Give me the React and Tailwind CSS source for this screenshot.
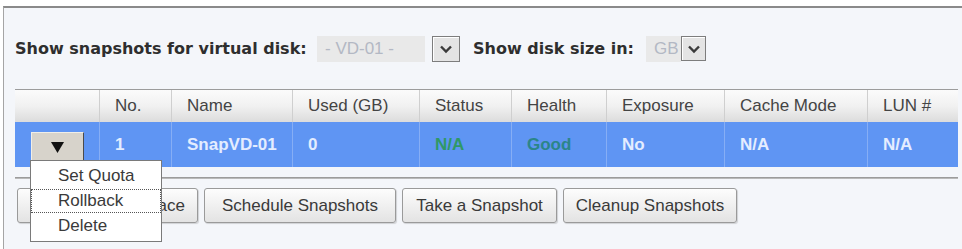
import React from 'react';

const cols = [
  { key: 'act', label: '', w: 'w-[85px]' },
  { key: 'no', label: 'No.', w: 'w-[72px]' },
  { key: 'name', label: 'Name', w: 'w-[121px]' },
  { key: 'used', label: 'Used (GB)', w: 'w-[127px]' },
  { key: 'status', label: 'Status', w: 'w-[92px]' },
  { key: 'health', label: 'Health', w: 'w-[95px]' },
  { key: 'exp', label: 'Exposure', w: 'w-[118px]' },
  { key: 'cache', label: 'Cache Mode', w: 'w-[143px]' },
  { key: 'lun', label: 'LUN #', w: 'flex-1' },
];

const row = {
  no: '1',
  name: 'SnapVD-01',
  used: '0',
  status: 'N/A',
  health: 'Good',
  exp: 'No',
  cache: 'N/A',
  lun: 'N/A',
};

function ArrowBox({ size }) {
  return (
    <div className={`${size} shrink-0 flex items-center justify-center border border-[#7d7d7d] bg-[#e4e4e4] shadow-[inset_1px_1px_0_#fff]`}>
      <svg width="14" height="10" viewBox="0 0 14 10">
        <path d="M2 2.5 L7 7.5 L12 2.5" fill="none" stroke="#3a3a3a" strokeWidth="2.4" />
      </svg>
    </div>
  );
}

function Btn({ children, w }) {
  return (
    <button className={`${w} h-[35px] shrink-0 whitespace-nowrap rounded-[3px] border border-[#9a9a9a] bg-gradient-to-b from-[#fdfdfd] to-[#e3e3e3] text-[17px] text-[#3a3a3a] shadow-[1px_1px_1px_rgba(0,0,0,0.15)]`}>
      {children}
    </button>
  );
}

export default function App() {
  const cellText = (k) => {
    if (k === 'status') return 'text-[#2f9866]';
    if (k === 'health') return 'text-[#2b8588]';
    return 'text-[#e4edff]';
  };

  return (
    <div className="w-[962px] h-[249px] bg-white overflow-hidden font-['Liberation_Sans',Arial,sans-serif]">
      <div className="relative mt-[6px] ml-[3px] h-[243px] border-t-2 border-l border-t-[#8a8a8a] border-l-[#a5a5a5] bg-[#f4f6fa] pl-[11px] pr-[4px]">
        {/* filter line */}
        <div className="h-[81px] flex items-center whitespace-nowrap font-['DejaVu_Sans',Verdana,sans-serif] font-bold text-[16px] text-[#2e2e2e]">
          <span className="w-[302px] shrink-0">Show snapshots for virtual disk:</span>
          <div className="w-[108px] h-[26px] shrink-0 bg-[#e9e9e9] flex items-center pl-[8px] font-['Liberation_Sans',Arial,sans-serif] font-normal text-[17px] text-[#b3b8c4]">
            - VD-01 -
          </div>
          <div className="ml-[7px]">
            <ArrowBox size="w-[28px] h-[26px]" />
          </div>
          <span className="ml-[13px] w-[173px] shrink-0">Show disk size in:</span>
          <div className="w-[35px] h-[26px] shrink-0 bg-[#e9e9e9] flex items-center pl-[8px] font-['Liberation_Sans',Arial,sans-serif] font-normal text-[17px] text-[#b3b8c4]">
            GB
          </div>
          <ArrowBox size="w-[25px] h-[25px]" />
        </div>

        {/* table */}
        <div className="border-t border-[#9c9c9c]">
          <div className="flex h-[32px] bg-gradient-to-b from-[#fbfbfb] via-[#f1f1f1] to-[#dcdcdc] text-[17px] text-[#444]">
            {cols.map((c, i) => (
              <div
                key={c.key}
                className={`${c.w} flex items-center pl-[15px] ${i < cols.length - 1 ? 'border-r border-[#cfcfcf]' : ''}`}
              >
                {c.label}
              </div>
            ))}
          </div>
          <div className="flex h-[45px] bg-[#5f95f3] text-[17px] font-bold">
            {cols.map((c, i) => (
              <div
                key={c.key}
                className={`${c.w} flex items-center ${c.key === 'act' ? 'pl-[16px]' : 'pl-[15px]'} ${i < cols.length - 1 ? 'border-r border-[#86aef5]' : ''} ${cellText(c.key)}`}
              >
                {c.key === 'act' ? (
                  <div className="w-[53px] h-[31px] mt-[5px] flex items-center justify-center bg-[#d7d3cb] border border-t-[#f0eee8] border-l-[#f0eee8] border-b-[#4a4a4a] border-r-[#4a4a4a]">
                    <svg width="13" height="11" viewBox="0 0 13 11">
                      <path d="M0 0 H13 L6.5 11 Z" fill="#111" />
                    </svg>
                  </div>
                ) : (
                  row[c.key]
                )}
              </div>
            ))}
          </div>
        </div>

        <div className="mt-[10px] h-[2px] bg-gradient-to-b from-[#8d8d8d] to-[#c9c9c9]" />

        {/* action buttons */}
        <div className="mt-[9px] flex items-center gap-[6px] pl-[2px]">
          <Btn w="w-[181px]">Set Snapshot Space</Btn>
          <Btn w="w-[192px]">Schedule Snapshots</Btn>
          <Btn w="w-[155px]">Take a Snapshot</Btn>
          <Btn w="w-[174px]">Cleanup Snapshots</Btn>
        </div>

        {/* dropdown menu */}
        <div className="absolute left-[26px] top-[152px] w-[132px] bg-white border border-[#7a7a7a] text-[17px] text-[#3a3a3a] py-[2px]">
          <div className="h-[26px] flex items-center pl-[27px]">Set Quota</div>
          <div className="h-[24px] flex items-center pl-[26px] border border-dotted border-[#555]">Rollback</div>
          <div className="h-[26px] flex items-center pl-[27px]">Delete</div>
        </div>
      </div>
    </div>
  );
}
